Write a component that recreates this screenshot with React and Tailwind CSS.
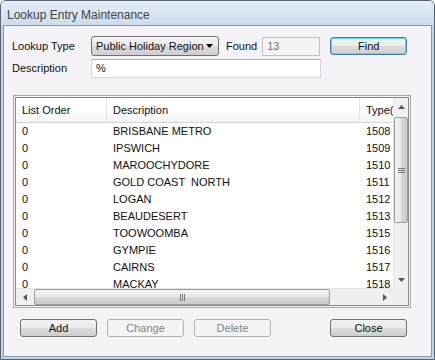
import React from 'react';

const rows = [
  ['0', 'BRISBANE METRO', '1508'],
  ['0', 'IPSWICH', '1509'],
  ['0', 'MAROOCHYDORE', '1510'],
  ['0', 'GOLD COAST  NORTH', '1511'],
  ['0', 'LOGAN', '1512'],
  ['0', 'BEAUDESERT', '1513'],
  ['0', 'TOOWOOMBA', '1515'],
  ['0', 'GYMPIE', '1516'],
  ['0', 'CAIRNS', '1517'],
  ['0', 'MACKAY', '1518'],
];

function Btn({ children, disabled, focused }) {
  if (disabled) {
    return (
      <div className="w-[77px] h-[18px] rounded-[3px] border border-[#adb2b5] bg-[#f4f4f4] text-[#838383] flex items-center justify-center">
        {children}
      </div>
    );
  }
  return (
    <div
      className={
        focused
          ? 'w-[77px] h-[18px] rounded-[3px] border border-[#3c7fb1] shadow-[inset_0_0_0_1px_#5fd6f8] bg-[linear-gradient(#f2f2f2,#ebebeb_50%,#dddddd_50%,#cfcfcf)] text-[#111] flex items-center justify-center'
          : 'w-[77px] h-[18px] rounded-[3px] border border-[#707070] bg-[linear-gradient(#f2f2f2,#ebebeb_50%,#dddddd_50%,#cfcfcf)] text-[#111] flex items-center justify-center'
      }
    >
      {children}
    </div>
  );
}

function Arrow({ dir }) {
  const pts = {
    up: '0,4 3.5,0 7,4',
    down: '0,0 3.5,4 7,0',
    left: '4,0 0,3.5 4,7',
    right: '0,0 4,3.5 0,7',
  }[dir];
  const horiz = dir === 'left' || dir === 'right';
  return (
    <svg width={horiz ? 4 : 7} height={horiz ? 7 : 4} viewBox={horiz ? '0 0 4 7' : '0 0 7 4'}>
      <polygon points={pts} fill="#555" />
    </svg>
  );
}

export default function App() {
  return (
    <div className="w-[435px] h-[360px] flex flex-col border border-[#5a6270] rounded-t-[6px] bg-[#c4d4e7] overflow-hidden font-['Liberation_Sans',Arial,sans-serif] text-[11px] text-[#111]">
      {/* Title bar */}
      <div className="h-[24px] shrink-0 pl-[6px] pt-[3px] flex items-center text-[12px] text-[#444] bg-[linear-gradient(#e4edf7,#cddced)]">
        Lookup Entry Maintenance
      </div>

      {/* Client area */}
      <div className="flex-1 mx-[2px] mb-[2px] border border-[#8a98aa] bg-[#f5f3f7] flex flex-col">
        {/* Lookup type row */}
        <div className="mt-[10px] ml-[8px] h-[20px] flex items-center">
          <div className="w-[79px]">Lookup Type</div>
          <div className="w-[128px] h-[20px] rounded-[3px] border border-[#707070] bg-[linear-gradient(#f2f2f2,#ebebeb_50%,#dddddd_50%,#cfcfcf)] flex items-center pl-[4px] pr-[5px]">
            <span className="flex-1 whitespace-nowrap">Public Holiday Region</span>
            <svg width="7" height="4" viewBox="0 0 7 4">
              <polygon points="0,0 3.5,4 7,0" fill="#000" />
            </svg>
          </div>
          <div className="ml-[7px]">Found</div>
          <div className="ml-[5px] w-[58px] h-[19px] border border-[#c2c2c2] bg-[#f4f4f4] text-[#6d6d6d] flex items-center pl-[4px]">
            13
          </div>
          <div className="ml-[10px]">
            <Btn focused>Find</Btn>
          </div>
        </div>

        {/* Description row */}
        <div className="mt-[3px] ml-[8px] h-[19px] flex items-center">
          <div className="w-[79px]">Description</div>
          <div className="w-[230px] h-[19px] border border-[#d4d8de] border-t-[#abadb3] bg-white flex items-center pl-[4px]">
            %
          </div>
        </div>

        {/* List frame */}
        <div className="mt-[17px] ml-[9px] w-[398px] h-[213px] border border-[#a9a9a9] p-[1px] flex">
          <div className="flex-1 border border-[#828790] bg-white grid grid-cols-[1fr_15px] grid-rows-[1fr_17px] overflow-hidden">
            {/* List */}
            <div className="overflow-hidden flex flex-col">
              <div className="h-[25px] shrink-0 flex border-b border-[#d5d5d5] bg-[linear-gradient(#ffffff,#ffffff_50%,#f3f4f6)]">
                <div className="w-[91px] shrink-0 pl-[6px] border-r border-[#e3e5e8] flex items-center">List Order</div>
                <div className="w-[253px] shrink-0 pl-[6px] border-r border-[#e3e5e8] flex items-center">Description</div>
                <div className="flex-1 min-w-0 pl-[6px] flex items-center whitespace-nowrap overflow-hidden">Type(</div>
              </div>
              {rows.map((r) => (
                <div key={r[1]} className="h-[17px] shrink-0 flex items-center">
                  <div className="w-[91px] shrink-0 pl-[6px]">{r[0]}</div>
                  <div className="w-[253px] shrink-0 pl-[6px] whitespace-pre">{r[1]}</div>
                  <div className="pl-[6px]">{r[2]}</div>
                </div>
              ))}
            </div>

            {/* Vertical scrollbar */}
            <div className="bg-[#f0f0f0] border-l border-[#e6e6e6] flex flex-col">
              <div className="h-[17px] flex items-center justify-center">
                <Arrow dir="up" />
              </div>
              <div className="mt-[2px] h-[106px] rounded-[2px] border border-[#9b9b9b] bg-[linear-gradient(90deg,#f3f3f3,#e8e8e8_50%,#d9d9d9_50%,#cbcbcb)] flex flex-col items-center justify-center gap-[1px]">
                <div className="w-[7px] h-[1px] bg-[#777]" />
                <div className="w-[7px] h-[1px] bg-[#777]" />
                <div className="w-[7px] h-[1px] bg-[#777]" />
              </div>
              <div className="flex-1" />
              <div className="h-[17px] flex items-center justify-center">
                <Arrow dir="down" />
              </div>
            </div>

            {/* Horizontal scrollbar */}
            <div className="bg-[#f0f0f0] border-t border-[#e6e6e6] flex">
              <div className="w-[17px] flex items-center justify-center">
                <Arrow dir="left" />
              </div>
              <div className="ml-[1px] w-[296px] rounded-[2px] border border-[#9b9b9b] bg-[linear-gradient(#f3f3f3,#e8e8e8_50%,#d9d9d9_50%,#cbcbcb)] flex items-center justify-center gap-[1px]">
                <div className="w-[1px] h-[7px] bg-[#777]" />
                <div className="w-[1px] h-[7px] bg-[#777]" />
                <div className="w-[1px] h-[7px] bg-[#777]" />
              </div>
              <div className="flex-1" />
              <div className="w-[17px] flex items-center justify-center">
                <Arrow dir="right" />
              </div>
            </div>

            {/* Corner */}
            <div className="bg-[#f0f0f0]" />
          </div>
        </div>

        {/* Bottom buttons */}
        <div className="mt-[11px] ml-[16px] mr-[24px] flex gap-[10px]">
          <Btn>Add</Btn>
          <Btn disabled>Change</Btn>
          <Btn disabled>Delete</Btn>
          <div className="ml-auto">
            <Btn>Close</Btn>
          </div>
        </div>
      </div>
    </div>
  );
}
